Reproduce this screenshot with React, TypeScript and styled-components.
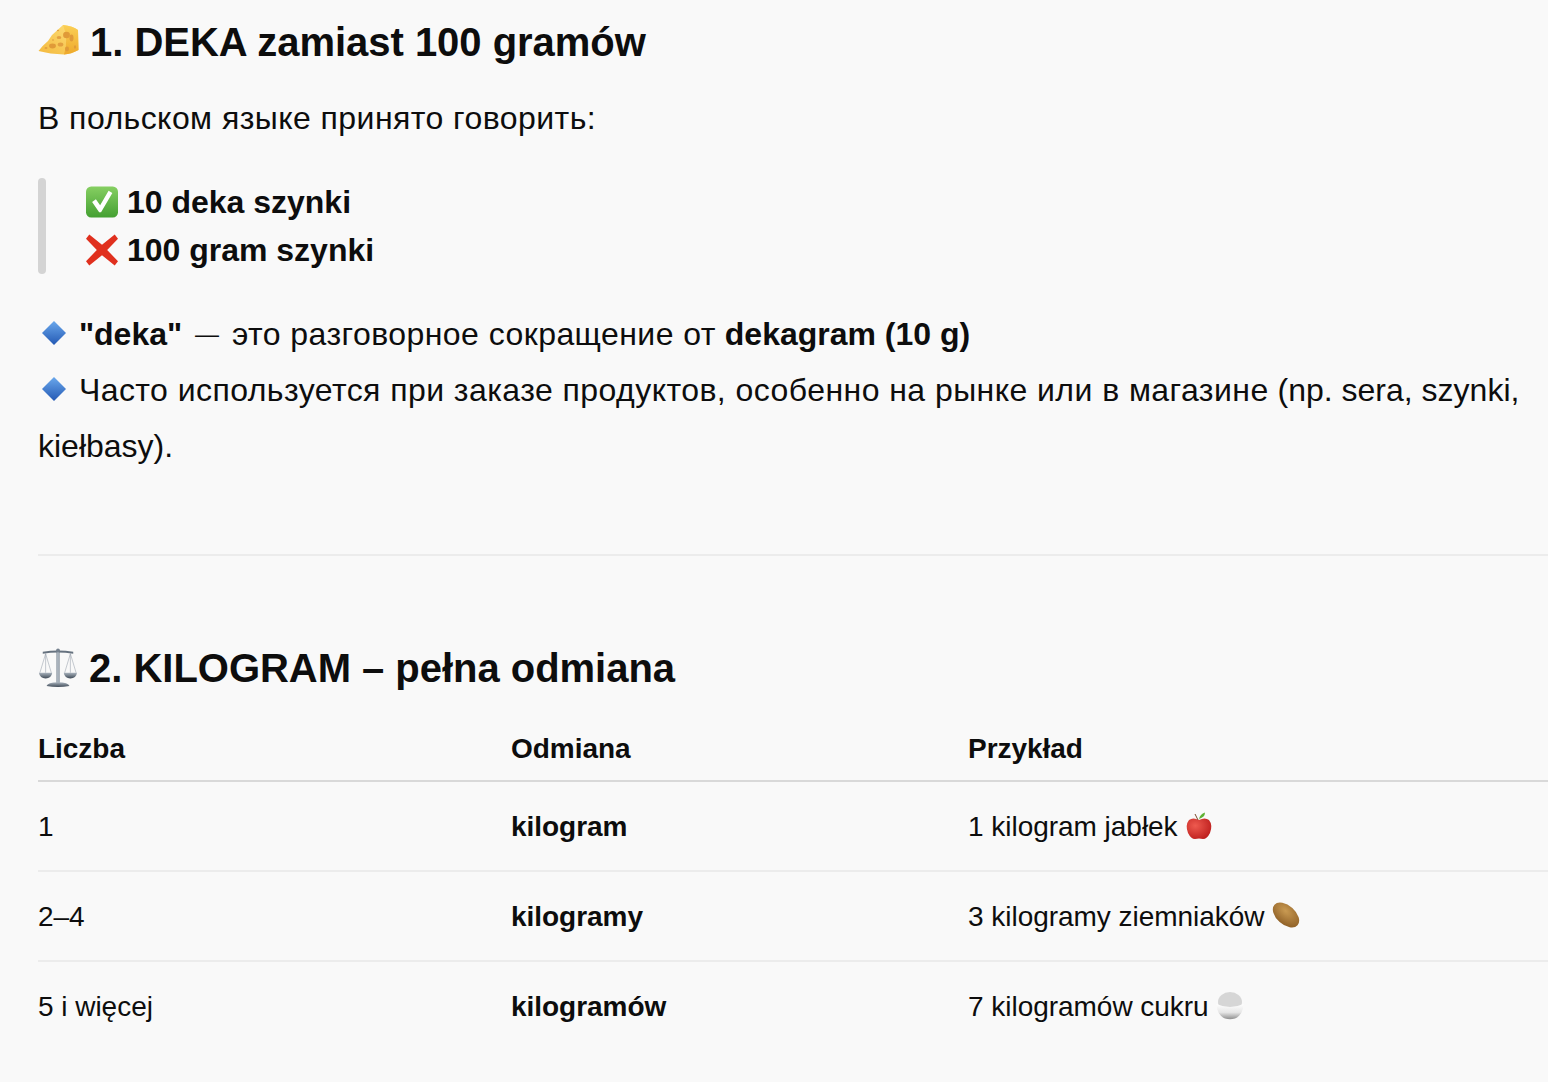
import React from "react";
import styled, { createGlobalStyle } from "styled-components";

const GlobalStyle = createGlobalStyle`
  html, body {
    margin: 0;
    padding: 0;
    height: 100%;
    overflow: hidden;
    background: #f9f9f9;
  }
`;

const Cheese = () => (
  <EmojiSvg $size={41} viewBox="0 0 41 41" $shift={-6}>
    <defs>
      <linearGradient id="cheeseTop" x1="0" y1="1" x2="1" y2="0">
        <stop offset="0" stopColor="#f4b93c" />
        <stop offset="1" stopColor="#fde07c" />
      </linearGradient>
      <linearGradient id="cheeseSide" x1="0" y1="0" x2="0" y2="1">
        <stop offset="0" stopColor="#fbcf55" />
        <stop offset="1" stopColor="#eea92c" />
      </linearGradient>
    </defs>
    <path d="M0.5 30 Q4 25 10 20 L14 14 L25 4 Q35 5 40 9 L40.5 29 Q33 33 26 33.5 Q12 33 0.5 30Z" fill="url(#cheeseTop)" />
    <path d="M25 4 Q35 5 40 9 L40.5 29 Q33 33 26 33.5 Q31 18 25 4Z" fill="url(#cheeseSide)" />
    <ellipse cx="28.5" cy="14" rx="3.4" ry="3.2" fill="#e09a38" />
    <ellipse cx="21" cy="16.5" rx="2.3" ry="1.6" fill="#e3a040" />
    <ellipse cx="14.5" cy="25" rx="3.4" ry="2.4" fill="#e09a38" />
    <ellipse cx="22.5" cy="23.5" rx="2.8" ry="2" fill="#e3a040" />
    <ellipse cx="8" cy="27" rx="1.5" ry="1" fill="#e3a040" />
    <ellipse cx="33.5" cy="17" rx="2" ry="3.4" fill="#e09a38" />
    <ellipse cx="29" cy="28" rx="2" ry="2.4" fill="#e09a38" />
    <ellipse cx="37" cy="26" rx="1.1" ry="1.7" fill="#e09a38" />
    <ellipse cx="20" cy="9.5" rx="1.1" ry="0.7" fill="#e3a040" />
    <ellipse cx="15" cy="19" rx="1" ry="0.7" fill="#e3a040" />
  </EmojiSvg>
);

const Scales = () => (
  <EmojiSvg $size={40} viewBox="0 0 40 42" $shift={-6}>
    <defs>
      <linearGradient id="panFill" x1="0" y1="0" x2="0" y2="1">
        <stop offset="0" stopColor="#a9b3bd" />
        <stop offset="1" stopColor="#3f4a57" />
      </linearGradient>
      <linearGradient id="postFill" x1="0" y1="0" x2="1" y2="0">
        <stop offset="0" stopColor="#6f7c89" />
        <stop offset="0.5" stopColor="#c6ced6" />
        <stop offset="1" stopColor="#65727f" />
      </linearGradient>
    </defs>
    <g fill="none" stroke="#9aa4ae" strokeWidth="0.6">
      <path d="M7 6 L1 26 M7 6 L13 26 M7 6 L7 26" />
      <path d="M33 6 L27 26 M33 6 L39 26 M33 6 L33 26" />
    </g>
    <path d="M4 4 Q20 1.5 36 4 L36 6 Q20 3.5 4 6Z" fill="#66727f" />
    <rect x="18.4" y="2" width="3.2" height="35" fill="url(#postFill)" />
    <circle cx="20" cy="2.6" r="2" fill="#75818e" />
    <path d="M0 26 H14 Q13 32 7 32 Q1 32 0 26Z" fill="url(#panFill)" />
    <path d="M26 26 H40 Q39 32 33 32 Q27 32 26 26Z" fill="url(#panFill)" />
    <path d="M8 40 Q9 36 20 36 Q31 36 32 40 Q20 42 8 40Z" fill="url(#panFill)" />
  </EmojiSvg>
);

const CheckBox = () => (
  <EmojiSvg $size={32} viewBox="1 0 32 34" $shift={-5}>
    <defs>
      <linearGradient id="checkFill" x1="0" y1="0" x2="0" y2="1">
        <stop offset="0" stopColor="#86cf62" />
        <stop offset="1" stopColor="#44a032" />
      </linearGradient>
    </defs>
    <rect x="0" y="0.5" width="34" height="33" rx="5.5" fill="url(#checkFill)" />
    <path d="M6.5 17 L10.5 14 L15 20.5 L24 5 L28 7.5 L16 28 L14 28Z" fill="#fff" />
  </EmojiSvg>
);

const Cross = () => (
  <EmojiSvg $size={32} viewBox="1 0 32 34" $shift={-5}>
    <path
      d="M3.5 0.5 L17 11.5 L30.5 0.5 L34 5 L22.5 17 L34 29 L30.5 33.5 L17 22.5 L3.5 33.5 L0 29 L11.5 17 L0 5Z"
      fill="#e0301e"
    />
  </EmojiSvg>
);

const Diamond = () => (
  <EmojiSvg $size={32} viewBox="0 0 32 32" $shift={-5}>
    <defs>
      <linearGradient id="diamondFill" x1="0" y1="0" x2="0" y2="1">
        <stop offset="0" stopColor="#6aa8ec" />
        <stop offset="1" stopColor="#2459b4" />
      </linearGradient>
    </defs>
    <path d="M16 3 L28 15 L16 27 L4 15Z" fill="url(#diamondFill)" />
  </EmojiSvg>
);

const Apple = () => (
  <EmojiSvg $size={28} viewBox="1 0 26 28" $shift={-4}>
    <defs>
      <radialGradient id="appleFill" cx="0.35" cy="0.35" r="0.8">
        <stop offset="0" stopColor="#ee5a4f" />
        <stop offset="1" stopColor="#b81818" />
      </radialGradient>
    </defs>
    <path d="M14 8 Q20 5 24 8 Q28 13 25 21 Q22 27 18 27 Q14 26 10 27 Q6 27 3 21 Q0 13 4 8 Q8 5 14 8Z" fill="url(#appleFill)" />
    <path d="M13 8 L10 2" stroke="#7a4a2a" strokeWidth="1" />
    <path d="M14 7 Q15 2 20 0.5 Q20 5 14 7Z" fill="#5fb133" />
  </EmojiSvg>
);

const Potato = () => (
  <EmojiSvg $size={28} viewBox="0 0 28 28" $shift={-3}>
    <defs>
      <radialGradient id="potatoFill" cx="0.4" cy="0.35" r="0.8">
        <stop offset="0" stopColor="#c99a52" />
        <stop offset="1" stopColor="#85561f" />
      </radialGradient>
    </defs>
    <ellipse cx="14" cy="14" rx="15.5" ry="9.5" transform="rotate(42 14 14)" fill="url(#potatoFill)" />
  </EmojiSvg>
);

const Rice = () => (
  <EmojiSvg $size={28} viewBox="0 0 28 28" $shift={-4}>
    <defs>
      <linearGradient id="bowlFill" x1="0" y1="0" x2="0" y2="1">
        <stop offset="0" stopColor="#ffffff" />
        <stop offset="0.55" stopColor="#e6e6e6" />
        <stop offset="1" stopColor="#8f8f8f" />
      </linearGradient>
    </defs>
    <ellipse cx="14" cy="10" rx="12" ry="10" fill="#d6d6d6" />
    <path d="M0.5 12 Q14 18 27.5 12 Q27 23 19 26.5 Q14 28 9 26.5 Q1 23 0.5 12Z" fill="url(#bowlFill)" />
  </EmojiSvg>
);

const rows = [
  { count: "1", form: "kilogram", example: "1 kilogram jabłek", icon: <Apple /> },
  { count: "2–4", form: "kilogramy", example: "3 kilogramy ziemniaków", icon: <Potato /> },
  { count: "5 i więcej", form: "kilogramów", example: "7 kilogramów cukru", icon: <Rice /> },
];

export default function App() {
  return (
    <>
      <GlobalStyle />
      <Page>
        <Heading>
          <Cheese /> 1. DEKA zamiast 100 gramów
        </Heading>
        <Paragraph>
          <Cyrillic>В польском языке принято говорить:</Cyrillic>
        </Paragraph>
        <Quote>
          <QuoteLine>
            <CheckBox /> 10 deka szynki
          </QuoteLine>
          <QuoteLine>
            <Cross /> 100 gram szynki
          </QuoteLine>
        </Quote>
        <Notes>
          <Diamond /> <strong>"deka"</strong> <Dash>—</Dash> <Cyrillic>это разговорное сокращение от</Cyrillic>{" "}
          <strong>dekagram (10 g)</strong>
          <br />
          <Diamond />{" "}
          <Cyrillic>Часто используется при заказе продуктов, особенно на рынке или в магазине</Cyrillic> (np. sera,
          szynki, kiełbasy).
        </Notes>
        <Divider />
        <Heading>
          <Scales /> 2. KILOGRAM – pełna odmiana
        </Heading>
        <Table>
          <thead>
            <tr>
              <HeadCell $width={473}>Liczba</HeadCell>
              <HeadCell $width={457}>Odmiana</HeadCell>
              <HeadCell>Przykład</HeadCell>
            </tr>
          </thead>
          <tbody>
            {rows.map((row) => (
              <Row key={row.count}>
                <Cell>{row.count}</Cell>
                <Cell>
                  <strong>{row.form}</strong>
                </Cell>
                <Cell>
                  {row.example} {row.icon}
                </Cell>
              </Row>
            ))}
          </tbody>
        </Table>
      </Page>
    </>
  );
}

const Page = styled.div`
  padding: 14px 24px 0 38px;
  width: 1548px;
  box-sizing: border-box;
  font-family: "Liberation Sans", Arial, sans-serif;
  font-size: 32px;
  line-height: 56px;
  color: #0d0d0d;
`;

const Heading = styled.h3`
  margin: 0;
  height: 56px;
  font-size: 40px;
  line-height: 56px;
  font-weight: 700;
  letter-spacing: -0.03px;
`;

const Paragraph = styled.p`
  margin: 20px 0 0;
`;

const Cyrillic = styled.span`
  letter-spacing: 0.44px;
`;

const Dash = styled.span`
  display: inline-block;
  font-size: 24px;
  line-height: 1;
  margin: 0 4px;
  vertical-align: 3px;
`;

const Quote = styled.blockquote`
  position: relative;
  margin: 32px 0 0;
  padding-left: 48px;
  &::before {
    content: "";
    position: absolute;
    left: 0;
    top: 0;
    bottom: 0;
    width: 8px;
    border-radius: 4px;
    background: #d4d4d4;
  }
`;

const QuoteLine = styled.div`
  font-weight: 700;
  height: 48px;
  line-height: 48px;
`;

const Notes = styled.p`
  margin: 32px 0 0;
`;

const Divider = styled.hr`
  margin: 80px -24px 84px 0;
  border: 0;
  border-top: 2px solid #ececec;
`;

const Table = styled.table`
  border-collapse: collapse;
  width: calc(100% + 24px);
  margin-top: 33px;
  font-size: 28px;
  line-height: 40px;
  letter-spacing: -0.03px;
  table-layout: fixed;
`;

const HeadCell = styled.th<{ $width?: number }>`
  width: ${(p) => (p.$width ? `${p.$width}px` : "auto")};
  padding: 0 0 11px;
  text-align: left;
  font-weight: 700;
  border-bottom: 2px solid #d9d9d9;
`;

const Row = styled.tr`
  border-bottom: 2px solid #ececec;
  &:last-child {
    border-bottom: 0;
  }
`;

const Cell = styled.td`
  padding: 25px 0 23px;
  height: 88px;
  box-sizing: border-box;
`;

const EmojiSvg = styled.svg.attrs({ xmlns: "http://www.w3.org/2000/svg" })<{ $size: number; $shift: number }>`
  display: inline-block;
  width: ${(p) => p.$size}px;
  height: ${(p) => p.$size}px;
  vertical-align: ${(p) => p.$shift}px;
  overflow: visible;
`;
